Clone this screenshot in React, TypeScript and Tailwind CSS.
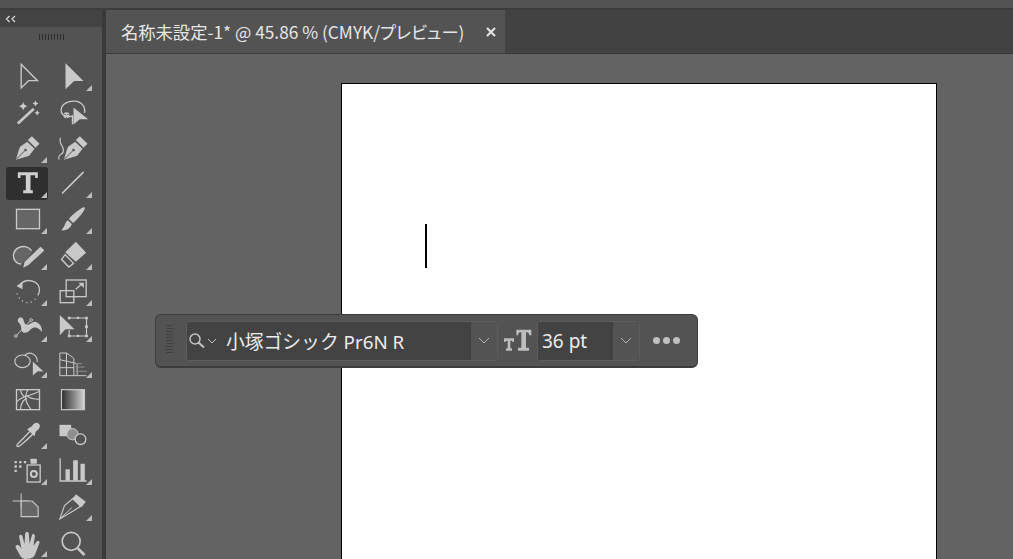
import type { ReactNode } from "react";

const ICON = "#c9c9c9";
const SANS = "font-['Noto_Sans','Noto_Sans_CJK_JP',sans-serif]";

type ToolProps = { vb: string; mark?: boolean; active?: boolean; children: ReactNode };

// coordinates inside each icon are 3x page pixels
const Tool = ({ vb, mark, active, children }: ToolProps) => (
  <div className="relative flex items-center justify-center w-[45px] h-[35.85px]">
    {active && <div className="absolute left-[1px] top-0 w-[42px] h-[33px] rounded-[3px] bg-[#2f2f2f]" />}
    <svg className="relative w-8 h-8" viewBox={vb} fill="none">
      {children}
    </svg>
    {mark && (
      <svg className="absolute right-[3px] bottom-[4px] w-[6px] h-[6px]" viewBox="0 0 6 6">
        <path d="M6 0V6H0Z" fill="#bdbdbd" />
      </svg>
    )}
  </div>
);

const star = (x: number, y: number, r: number) =>
  `M${x} ${y - r}Q${x + 2} ${y - 2} ${x + r} ${y}Q${x + 2} ${y + 2} ${x} ${y + r}Q${x - 2} ${y + 2} ${x - r} ${y}Q${x - 2} ${y - 2} ${x} ${y - r}Z`;

const Toolbar = () => (
  <aside className="flex flex-col w-[102px] shrink-0 bg-[#535353]">
    <div className="flex items-center shrink-0 h-[17px] pl-[5px] bg-[#434343]">
      <svg className="w-[12px] h-[8px]" viewBox="0 0 12 8" fill="none" stroke="#d8d8d8" strokeWidth="1.3">
        <path d="M4.5 1 1.5 4l3 3M10 1 7 4l3 3" />
      </svg>
    </div>
    <div className="flex justify-center shrink-0 gap-[2px] pl-[1px] mt-[7px] h-[6px]">
      {Array.from({ length: 9 }).map((_, i) => (
        <span key={i} className="w-[1px] h-[6px] bg-[#2e2e2e]" />
      ))}
    </div>
    <div className="grid grid-cols-[45px_45px] shrink-0 pl-[5px] mt-[19px]">
      <Tool vb="34.5 183 96 96">
        <path d="M62 193 111 242H84L62 264Z" stroke={ICON} strokeWidth="4" />
      </Tool>
      <Tool vb="169.5 183 96 96" mark>
        <path d="M195 190 249 243H221L195 268Z" fill={ICON} />
      </Tool>

      <Tool vb="34.5 290.5 96 96">
        <path d="M52 370 100 326" stroke={ICON} strokeWidth="8" />
        <path d={star(68, 318, 13)} fill={ICON} />
        <path d={star(105, 310, 9)} fill={ICON} />
        <path d={star(110, 338, 8)} fill={ICON} />
      </Tool>
      <Tool vb="169.5 290.5 96 96">
        <path d="M216 372V347C195 356 181 344 182 328 184 310 205 302 222 303 242 304 256 318 252 338" stroke={ICON} strokeWidth="4" />
        <circle cx="198" cy="345" r="9" fill={ICON} />
        <path d="M192 343h4M200 343h4M197 352h3" stroke="#535353" strokeWidth="3" />
        <path d="M219 322 263 357H238L219 373Z" fill={ICON} />
      </Tool>

      <Tool vb="34.5 398 96 96" mark>
        <path d="M94 408 117 430 105 442 82 419Z" fill={ICON} />
        <path d="M46 478 58 440 80 424 102 445 86 466Z" fill={ICON} />
        <path d="M48 476 72 452" stroke="#535353" strokeWidth="3" />
        <circle cx="75" cy="449" r="4" fill="#535353" />
      </Tool>
      <Tool vb="169.5 398 96 96">
        <path d="M238 408 261 430 249 442 226 419Z" fill={ICON} />
        <path d="M190 478 202 440 224 424 246 445 230 466Z" fill={ICON} />
        <path d="M192 476 216 452" stroke="#535353" strokeWidth="3" />
        <circle cx="219" cy="449" r="4" fill="#535353" />
        <path d="M180 412C172 432 194 438 188 455 184 465 170 462 176 478" stroke={ICON} strokeWidth="3.5" />
      </Tool>

      <Tool vb="34.5 505 96 96" active mark>
        <path d="M52 518H112V535H104V527H90V572H97V581H68V572H76V527H60V535H52Z" fill="#cfcfcf" />
      </Tool>
      <Tool vb="169.5 505 96 96" mark>
        <path d="M186 580 248 518" stroke={ICON} strokeWidth="5" strokeLinecap="round" />
      </Tool>

      <Tool vb="34.5 43 96 96" mark>
        <rect x="48" y="59" width="69" height="58" fill="#666666" stroke={ICON} strokeWidth="4" />
      </Tool>
      <Tool vb="169.5 43 96 96" mark>
        <path d="M253 53C256 62 226 94 218 100L205 88C212 78 244 50 253 53Z" fill={ICON} />
        <path d="M202 92 214 103C210 116 196 124 182 122 192 115 192 100 202 92Z" fill={ICON} />
      </Tool>

      <Tool vb="34.5 151 96 96" mark>
        <path d="M62 223C46 222 37 208 39 194 42 178 58 168 74 171 84 173 90 178 93 192L68 218Z" fill="#666666" />
        <path d="M62 223C46 222 37 208 39 194 42 178 58 168 74 171 84 173 90 178 93 184" stroke={ICON} strokeWidth="4" />
        <path d="M120 171 132 182 84 226 68 234 72 217Z" fill={ICON} />
      </Tool>
      <Tool vb="169.5 151 96 96" mark>
        <path d="M226 156 257 189 226 216 194 188Z" fill={ICON} />
        <path d="M194 195 219 221 205 232 183 209Z" stroke={ICON} strokeWidth="4" />
      </Tool>

      <Tool vb="34.5 258 96 96" mark>
        <path d="M60 283C78 262 118 272 117 302 116 310 114 313 112 316" stroke={ICON} strokeWidth="4" />
        <path d="M48 288 66 275 66 298Z" fill={ICON} />
        <path d="M50 312h.1M56 324h.1M66 333h.1M79 338h.1M92 336h.1M104 328h.1" stroke={ICON} strokeWidth="4" strokeLinecap="round" />
      </Tool>
      <Tool vb="169.5 258 96 96" mark>
        <rect x="197" y="270" width="60" height="50" stroke={ICON} strokeWidth="4" />
        <rect x="179" y="302" width="41" height="36" stroke={ICON} strokeWidth="4" />
        <path d="M226 298 246 280" stroke={ICON} strokeWidth="4" />
        <path d="M234 278H250V294Z" fill={ICON} />
      </Tool>

      <Tool vb="34.5 366 96 96" mark>
        <path d="M58 382C72 382 68 396 74 402 84 412 94 392 106 396 118 400 126 412 124 426 116 414 106 410 96 414 86 420 84 430 70 428 58 426 66 406 56 400 50 394 50 388 58 382Z" fill={ICON} />
        <path d="M46 438 92 390" stroke={ICON} strokeWidth="3" />
        <circle cx="46" cy="438" r="4" fill="#535353" stroke={ICON} strokeWidth="3" />
        <circle cx="92" cy="390" r="4" fill="#535353" stroke={ICON} strokeWidth="3" />
      </Tool>
      <Tool vb="169.5 366 96 96" mark>
        <path d="M178 375 222 418H195L178 436Z" fill={ICON} />
        <path d="M206 384H258V438H206V420" stroke={ICON} strokeWidth="3.5" />
        <path d="M202 380h8v8h-8ZM229 380h7v7h-7ZM254 380h8v8h-8ZM254 406h8v8h-8ZM254 434h8v8h-8ZM229 434h7v7h-7ZM202 434h8v8h-8Z" fill={ICON} />
      </Tool>

      <Tool vb="34.5 473 96 96" mark>
        <ellipse cx="66" cy="513" rx="23" ry="19" stroke={ICON} strokeWidth="3.5" />
        <path d="M72 495C90 480 112 495 110 515" stroke={ICON} strokeWidth="3.5" />
        <path d="M53 513h.1M62 513h.1M71 513h.1M80 513h.1" stroke={ICON} strokeWidth="3.5" />
        <path d="M96 512 131 544H112L96 557Z" fill={ICON} stroke="#535353" strokeWidth="2" />
      </Tool>
      <Tool vb="169.5 473 96 96" mark>
        <path d="M178 488V556H258M178 488H198L220 504V556M198 488V556M178 508 230 520V556M178 532H220" stroke={ICON} strokeWidth="3" />
        <path d="M225 520H245M225 530H252M225 543H258" stroke="#8f8f8f" strokeWidth="3" />
      </Tool>

      <Tool vb="34.5 26 96 96">
        <rect x="48" y="43" width="69" height="60" stroke={ICON} strokeWidth="4" />
        <path d="M48 80C65 60 85 65 117 48M82 43C70 65 75 80 92 103M60 103C60 85 70 70 80 70M117 72C100 72 85 70 76 58M60 43C62 58 70 64 76 66" stroke={ICON} strokeWidth="3.5" />
      </Tool>
      <Tool vb="169.5 26 96 96">
        <defs>
          <linearGradient id="gr" x1="0" x2="1" y1="0" y2="0">
            <stop offset="0" stopColor="#2c2c2c" />
            <stop offset="1" stopColor="#d5d5d5" />
          </linearGradient>
        </defs>
        <rect x="183" y="43" width="69" height="60" fill="url(#gr)" stroke={ICON} strokeWidth="3.5" />
      </Tool>

      <Tool vb="34.5 134.5 96 96" mark>
        <path d="M88 172 54 207C47 213 48 217 54 217 58 217 92 186 98 178" stroke={ICON} strokeWidth="4" />
        <path d="M80 165 102 186 106 172C118 164 122 154 114 148 108 143 100 146 94 156Z" fill={ICON} />
      </Tool>
      <Tool vb="169.5 134.5 96 96">
        <rect x="177" y="152" width="35" height="34" fill={ICON} />
        <circle cx="216" cy="180" r="17" fill="#8f8f8f" stroke={ICON} strokeWidth="3" />
        <circle cx="240" cy="195" r="16" fill="#535353" stroke={ICON} strokeWidth="4" />
      </Tool>

      <Tool vb="34.5 242 96 96" mark>
        <path d="M42 260h7v7h-7ZM56 260h7v7h-7ZM70 260h7v7h-7ZM42 273h7v7h-7ZM56 273h7v7h-7ZM42 286h7v7h-7Z" fill={ICON} />
        <rect x="90" y="253" width="19" height="15" rx="2" fill={ICON} />
        <rect x="80" y="272" width="39" height="51" stroke={ICON} strokeWidth="4" />
        <circle cx="100" cy="299" r="9" stroke={ICON} strokeWidth="6" />
      </Tool>
      <Tool vb="169.5 242 96 96" mark>
        <path d="M179 252V320H258" stroke={ICON} strokeWidth="4" />
        <path d="M195 285h13v34h-13ZM218 258h14v61h-14ZM240 268h13v51h-13Z" fill={ICON} />
      </Tool>

      <Tool vb="34.5 350 96 96">
        <path d="M37 380H85M62 357V400" stroke={ICON} strokeWidth="3" />
        <path d="M62 380H95L113 398V427H62Z" fill="#666666" stroke={ICON} strokeWidth="3.5" />
      </Tool>
      <Tool vb="169.5 350 96 96" mark>
        <path d="M178 434 192 394 218 372 240 396 218 410Z" stroke={ICON} strokeWidth="3.5" />
        <path d="M226 360 256 382 243 399 215 375Z" fill={ICON} />
        <path d="M178 434 214 400" stroke={ICON} strokeWidth="3" />
      </Tool>

      <Tool vb="34.5 456 96 96" mark>
        <path d="M76 552C62 552 58 540 46 518 42 510 52 506 58 514L63 522 56 486C55 478 64 476 66 484L72 508 74 476C75 468 84 468 85 476L87 506 94 482C96 474 105 477 103 485L99 512 108 500C112 494 120 498 116 506L104 538C100 548 92 552 76 552Z" fill={ICON} />
      </Tool>
      <Tool vb="169.5 456 96 96">
        <circle cx="212" cy="499" r="27" stroke={ICON} strokeWidth="5" />
        <path d="M232 520 252 540" stroke={ICON} strokeWidth="8" />
      </Tool>
    </div>
  </aside>
);

const Chevron = () => (
  <svg className="w-[12px] h-[7px]" viewBox="0 0 12 7" fill="none" stroke="#b8b8b8" strokeWidth="1">
    <path d="M1 1 6 6l5-5" />
  </svg>
);

const TextBar = () => (
  <div className="absolute left-[49px] top-[260px] flex items-center w-[543px] h-[54px] rounded-[6px] bg-[#535353] border border-[#3c3c3c] border-b-2">
    <div className="grid grid-rows-[repeat(11,2px)] gap-px ml-[10px] w-[7px]">
      {Array.from({ length: 10 }).map((_, i) => (
        <span key={i} className="h-[1px] bg-[#404040]" />
      ))}
    </div>
    <div className="flex items-center h-[40px] ml-[13px] w-[312px] rounded-[3px] border border-[#5c5c5c] bg-[#434343]">
      <div className={`flex items-center flex-1 h-full pl-[1px] text-[18.8px] text-[#ececec] ${SANS}`}>
        <svg className="w-[18px] h-[18px]" viewBox="0 0 18 18" fill="none" stroke="#c4c4c4">
          <circle cx="7" cy="7" r="5" strokeWidth="1.5" />
          <path d="M10.5 10.5 16 15.5" strokeWidth="2" />
        </svg>
        <svg className="w-[10px] h-[6px] ml-[1px]" viewBox="0 0 10 6" fill="none" stroke="#c4c4c4">
          <path d="M1 1 5 5l4-4" />
        </svg>
        <span className="ml-[9px] mt-[4px] whitespace-nowrap">小塚ゴシック Pr6N R</span>
      </div>
      <div className="flex items-center justify-center w-[27px] h-full bg-[#535353] border-l border-[#404040] rounded-r-[3px]">
        <Chevron />
      </div>
    </div>
    <svg className="ml-[6px] w-[28px] h-[24px]" viewBox="225 60 84 72" fill="#bdbdbd">
      <path d="M262 62H307V79H301C300 73 298 70 293 70H291V116H300V125H267V116H277V70H275C270 70 268 73 267 79H262Z" />
      <path d="M225 88H255V99H251C250 96 249 95 246 95H244V118H249V125H231V118H236V95H234C231 95 230 96 229 99H225Z" />
    </svg>
    <div className="flex items-center h-[40px] ml-[5px] w-[103px] rounded-[3px] border border-[#5c5c5c] bg-[#434343]">
      <span className={`flex-1 pl-[4px] mt-[1px] text-[19px] text-[#ececec] ${SANS}`}>36 pt</span>
      <div className="flex items-center justify-center w-[27px] h-full bg-[#535353] border-l border-[#404040] rounded-r-[3px]">
        <Chevron />
      </div>
    </div>
    <div className="flex gap-[3px] ml-[13px]">
      <span className="w-[7px] h-[7px] rounded-full bg-[#c0c0c0]" />
      <span className="w-[7px] h-[7px] rounded-full bg-[#c0c0c0]" />
      <span className="w-[7px] h-[7px] rounded-full bg-[#c0c0c0]" />
    </div>
  </div>
);

export default function App() {
  return (
    <div className="flex flex-col w-[1013px] h-[559px] overflow-hidden bg-[#535353]">
      <div className="h-[10px] shrink-0 bg-[#535353] border-b-2 border-[#3d3d3d]" />
      <div className="flex flex-1 min-h-0">
        <Toolbar />
        <div className="w-[4px] shrink-0 bg-[#3a3a3a]" />
        <main className="flex flex-col flex-1 min-w-0">
          <div className="flex h-[44px] shrink-0 bg-[#424242] border-b border-[#3a3a3a]">
            <div className="flex items-center w-[400px] pl-[15px] bg-[#535353] border-r border-[#454545] text-[17.3px] text-[#e6e6e6] whitespace-nowrap font-['Noto_Sans_CJK_JP',sans-serif] [font-feature-settings:'palt']">
              <span className="w-[365px]">名称未設定-1* @ 45.86 % (CMYK/プレビュー)</span>
              <svg className="w-[10px] h-[10px]" viewBox="0 0 10 10" stroke="#e6e6e6" strokeWidth="2">
                <path d="M1 1 9 9M9 1 1 9" />
              </svg>
            </div>
          </div>
          <div className="relative flex-1 min-h-0 overflow-hidden bg-[#636363]">
            <div className="relative ml-[235px] mt-[29px] w-[596px] h-[600px] bg-white border border-black">
              <div className="absolute left-[83px] top-[140px] w-[2px] h-[44px] bg-black" />
            </div>
            <TextBar />
          </div>
        </main>
      </div>
    </div>
  );
}
